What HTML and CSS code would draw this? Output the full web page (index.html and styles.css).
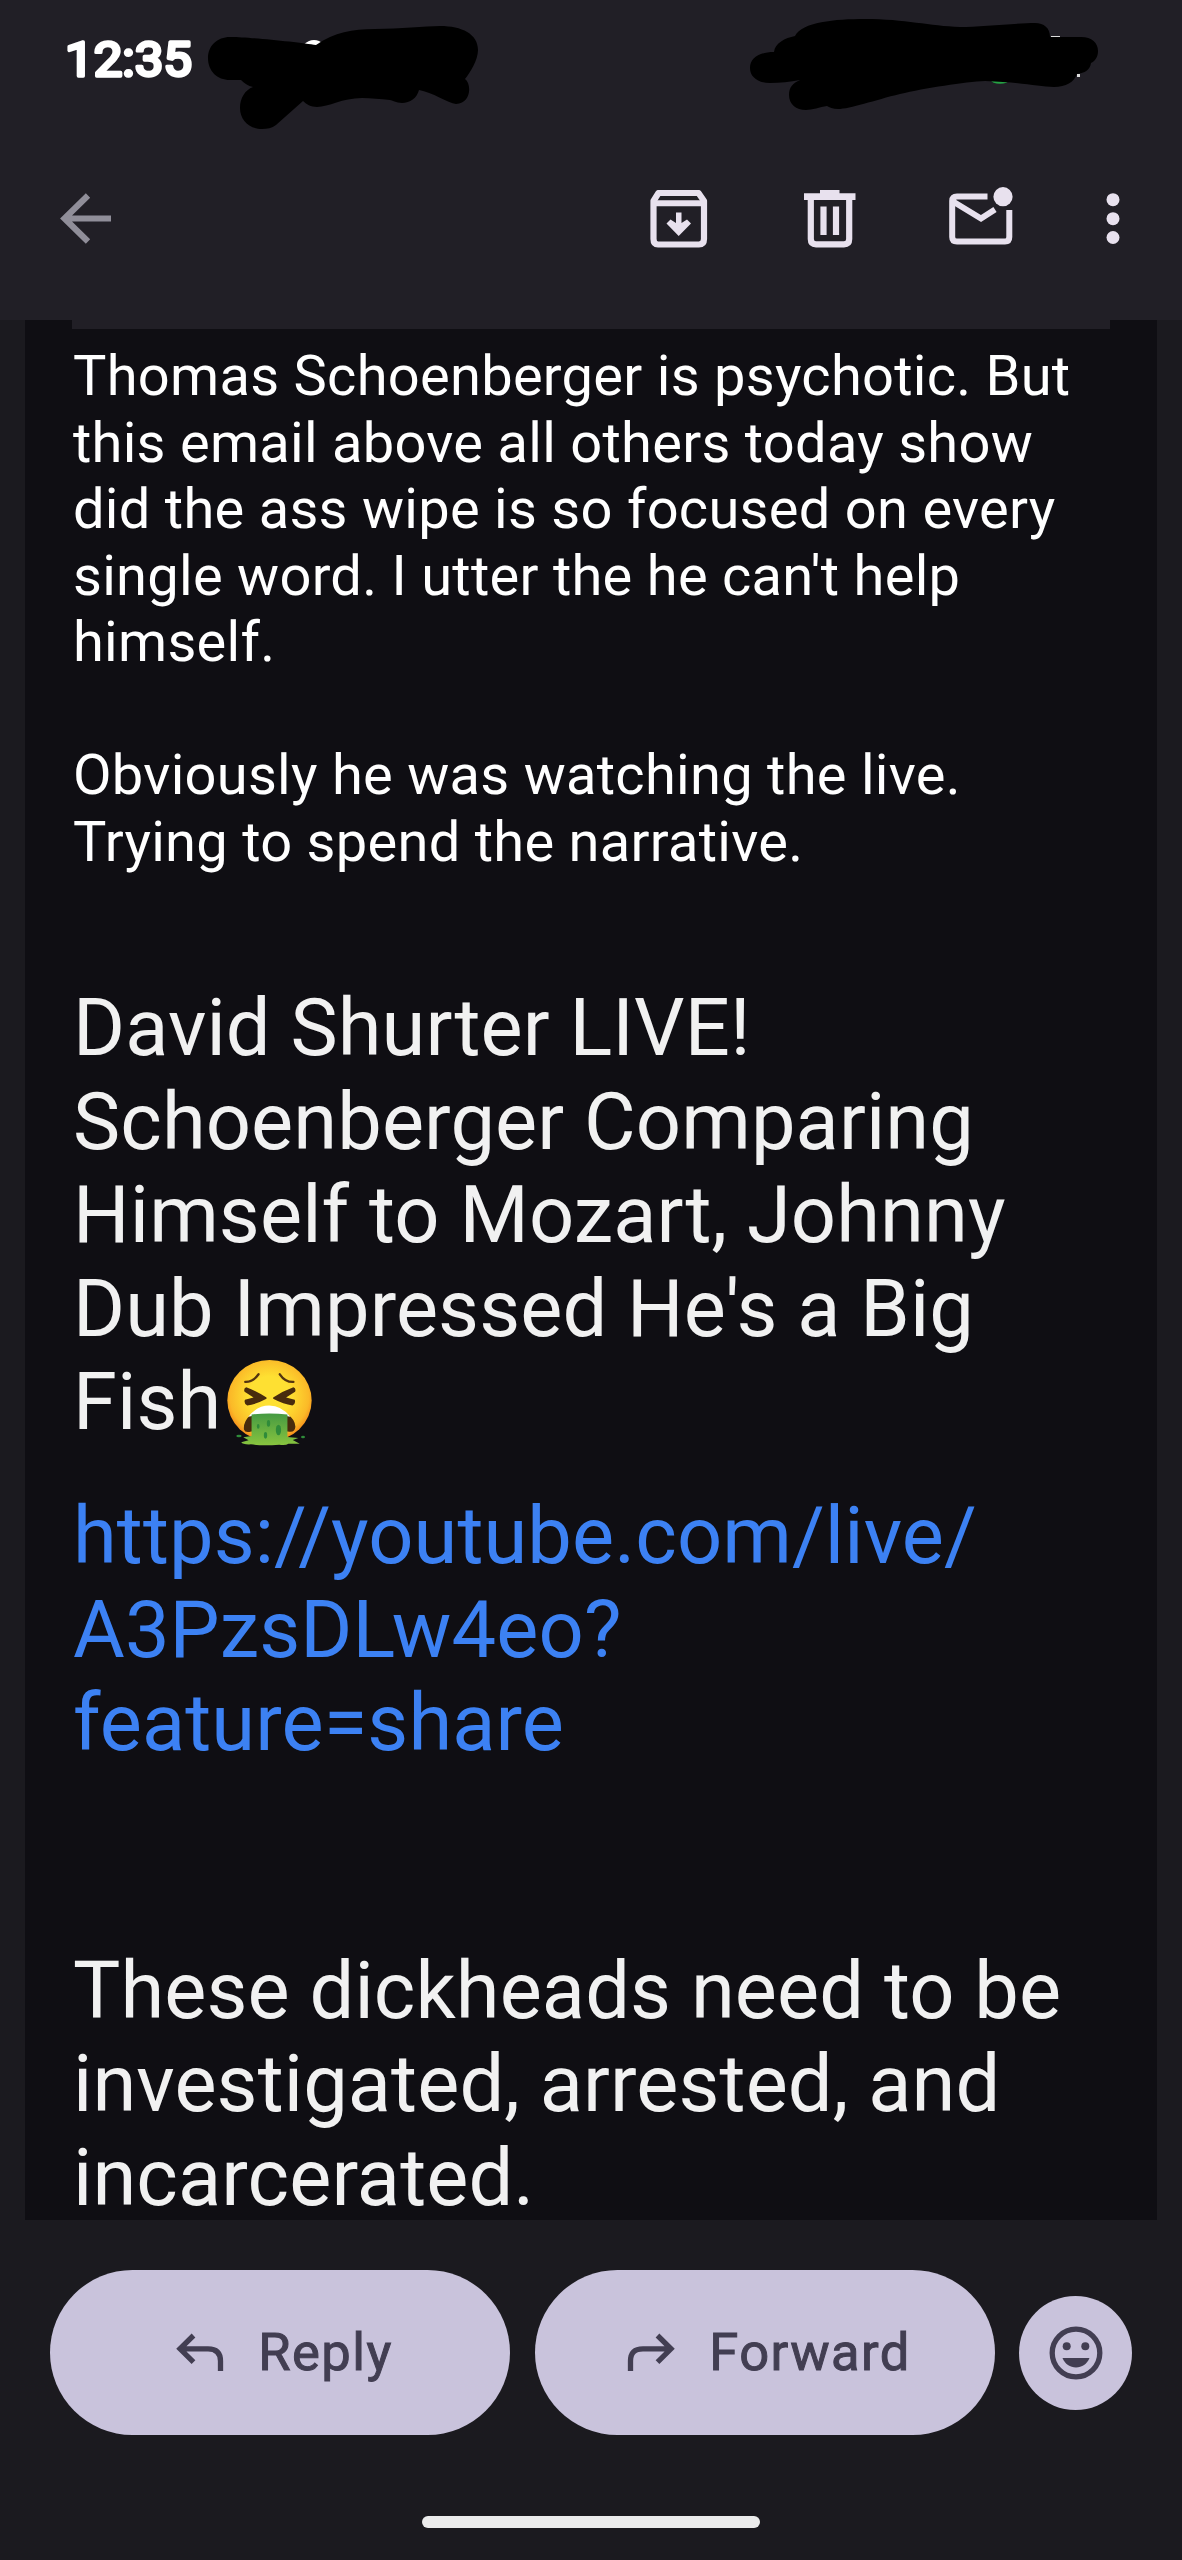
FILE: index.html
```html
<!DOCTYPE html>
<html lang="en">
<head>
    <meta charset="UTF-8">
    <title>mail</title>
    <link rel="stylesheet" href="styles.css">
</head>
<body>
<div class="phone">
    <div class="header">
        <div class="status">
            <svg class="clock" width="140" height="60" viewBox="0 0 140 60">
                <text x="4" y="45" textLength="127" lengthAdjust="spacingAndGlyphs">12:35</text>
            </svg>
            <!-- black marker strokes over the status icons -->
            <svg class="marker" width="1182" height="140" viewBox="0 0 1182 140">
                <circle cx="314" cy="53" r="13" fill="#fff"/>
                <path d="M230 37C236 36 300 42 316 45C335 32 352 29 375 29C400 29 425 26 440 26C462 26 478 34 478 50C478 60 470 73 465 79C472 84 471 104 456 104C448 103 432 92 419 90C417 98 410 103 402 103C396 103 392 100 390 100C380 99 371 98 362 98C342 98 329 107 317 107C311 107 306 104 303 101L276 125C272 128 267 129 262 129C249 129 240 120 240 108C240 98 245 90 253 87C248 86 244 83 241 80L230 80C217 80 208 71 208 58C208 46 217 37 230 37Z"/>
                <ellipse cx="1000" cy="80" rx="9" ry="3.8" fill="#25a244"/>
                <path d="M1051 36h9v3h-9zM1077 74h3v3h-3z" fill="#ddd"/>
                <path d="M774 52C775 43 785 38 795 36C802 22 835 19 865 19C905 19 930 26 960 27C980 27 1018 23 1035 23C1044 23 1050 28 1050 37L1081 37C1092 37 1098 43 1098 51C1098 57 1095 61 1091 63C1090 70 1085 73 1077 74C1074 82 1066 87 1054 87C1038 87 1020 82 985 81C965 82 925 88 900 94C875 100 850 109 838 109C833 109 829 107 827 106C820 107 812 110 806 110C796 110 789 104 789 95C789 87 793 83 800 80C790 82 780 83 770 83C758 83 750 77 750 68C750 58 759 52 774 52Z"/>
            </svg>
        </div>
        <div class="toolbar">
            <svg class="back" width="51" height="51" viewBox="0 0 51 51">
                <path d="M28 2.5L4.5 25.5L28 48.500M5 25.500H51" fill="none" stroke="#908e99" stroke-width="6.200"/>
            </svg>
            <svg class="archive" width="58" height="58" viewBox="0 0 58 58">
                <path d="M8.500 3H48.500L54 11V49Q54 54.500 49 54.500H8Q3.500 54.500 3.500 49V11Z" fill="none" stroke="#e8e1ee" stroke-width="6.200" stroke-linejoin="round"/>
                <path d="M3 13.300H55" fill="none" stroke="#e8e1ee" stroke-width="6"/>
                <path d="M26 22.500H31.500V33L37 29.500L41 33.500L28.700 46L16.500 33.500L20.500 29.500L26 33Z" fill="#e8e1ee"/>
            </svg>
            <svg class="trash" width="52" height="58" viewBox="0 0 52 58">
                <path d="M0 3.200H16V0H35.500V3.200H51.500V10H0Z" fill="#e8e1ee"/>
                <path d="M6.800 8V49Q6.800 54.300 12 54.300H40Q45.200 54.300 45.200 49V8M19.500 16.500V45M32 16.500V45" fill="none" stroke="#e8e1ee" stroke-width="6.200"/>
            </svg>
            <svg class="unread" width="64" height="58" viewBox="0 0 64 58">
                <path d="M38.500 9.500H8Q3.200 9.500 3.200 14V50Q3.200 54.500 8 54.500H56Q60.300 54.500 60.300 50V23" fill="none" stroke="#e8e1ee" stroke-width="6"/>
                <path d="M4 14.500L32 31.500L46 22.500" fill="none" stroke="#e8e1ee" stroke-width="6"/>
                <circle cx="54" cy="9.700" r="9.600" fill="#e8e1ee"/>
            </svg>
            <svg class="more" width="14" height="52" viewBox="0 0 14 52">
                <circle cx="7" cy="6.700" r="6.500" fill="#e8e1ee"/>
                <circle cx="7" cy="25.700" r="6.500" fill="#e8e1ee"/>
                <circle cx="7" cy="44.500" r="6.500" fill="#e8e1ee"/>
            </svg>
        </div>
    </div>

    <div class="mail">
        <div class="rule"></div>
        <p class="text">Thomas Schoenberger is psychotic. But<br>this email above all others today show<br>did the ass wipe is so focused on every<br>single word. I utter the he can't help<br>himself.</p>
        <p class="text">Obviously he was watching the live.<br>Trying to spend the narrative.</p>
        <div class="big title">David Shurter LIVE!<br>Schoenberger Comparing<br>Himself to Mozart, Johnny<br>Dub Impressed He's a Big<br>Fish<svg class="emoji" width="87" height="89" viewBox="80 56 262 266">
            <defs>
                <radialGradient id="face" cx=".5" cy=".45" r=".55">
                    <stop offset=".45" stop-color="#fee032"/>
                    <stop offset=".85" stop-color="#fbb928"/>
                    <stop offset="1" stop-color="#f68a1a"/>
                </radialGradient>
                <linearGradient id="green" x2="0" y2="1">
                    <stop offset="0" stop-color="#459a42"/>
                    <stop offset="1" stop-color="#88c43f"/>
                </linearGradient>
            </defs>
            <ellipse cx="211" cy="183" rx="127" ry="122" fill="url(#face)"/>
            <path d="M138 127Q161 128 178 104M242 104Q258 128 283 127" fill="none" stroke="#543410" stroke-width="7" stroke-linecap="round"/>
            <path d="M141 143Q172 154 202 174V178Q170 195 144 198Q133 192 137 181L163 174L136 157Q132 146 141 143ZM283 143Q252 154 222 174V178Q254 195 280 198Q291 192 287 181L261 174L288 157Q292 146 283 143Z" fill="#482b0d"/>
            <path d="M152 228Q132 246 134 270Q138 282 156 276H266Q287 282 289 262Q288 240 266 225Z" fill="#482b0d"/>
            <path d="M147 232Q174 198 210 198Q247 198 274 232Q210 218 147 232Z" fill="#fff"/>
            <path d="M157 225Q210 219 265 225V293L298 296L281 302L302 313H268Q260 319 240 316Q190 320 155 315Q130 316 126 309L148 303L132 294L157 290Z" fill="url(#green)"/>
            <g fill="#2f8b3a">
                <ellipse cx="238" cy="272" rx="8" ry="16"/>
                <ellipse cx="208" cy="252" rx="5" ry="10"/>
                <ellipse cx="199" cy="288" rx="5" ry="10"/>
                <ellipse cx="177" cy="261" rx="4" ry="7"/>
                <ellipse cx="119" cy="290" rx="8" ry="4"/>
                <ellipse cx="312" cy="293" rx="6" ry="4"/>
            </g>
        </svg></div>
        <a class="big link">https://youtube.com/live/<br>A3PzsDLw4eo?<br>feature=share</a>
        <div class="big">These dickheads need to be<br>investigated, arrested, and<br>incarcerated.</div>
    </div>

    <div class="actions">
        <div class="btn">
            <svg width="48" height="38" viewBox="0 0 48 38">
                <path d="M17.500 2.500L4 15.800L17.500 29.200M4 15.800H32Q44.500 15.800 44.500 28V38" fill="none" stroke="#423e52" stroke-width="5.300"/>
            </svg>
            <span>Reply</span>
        </div>
        <div class="btn">
            <svg width="48" height="38" viewBox="0 0 48 38">
                <path d="M30.500 2.500L44 15.800L30.500 29.200M44 15.800H16Q3.500 15.800 3.500 28V38" fill="none" stroke="#423e52" stroke-width="5.300"/>
            </svg>
            <span>Forward</span>
        </div>
        <div class="react">
            <svg width="54" height="54" viewBox="0 0 54 54">
                <circle cx="27" cy="27" r="23.800" fill="none" stroke="#423e52" stroke-width="5.300"/>
                <circle cx="17.700" cy="20.300" r="4" fill="#423e52"/>
                <circle cx="36.300" cy="20.300" r="4" fill="#423e52"/>
                <path d="M13.500 32H40.500C38 38 33 41.500 27 41.500S16 38 13.500 32Z" fill="#423e52"/>
            </svg>
        </div>
    </div>
    <div class="home"></div>
</div>
</body>
</html>
```
FILE: styles.css
```css
*{
    margin:0;
    padding:0;
    box-sizing: border-box;
}

body{
    background-color: #1b1a1f;
    font-family: Roboto, "Liberation Sans", sans-serif;
}

.phone{
    width:1182px;
    height:2560px;
    display: flex;
    flex-direction: column;
    overflow: hidden;
}

/* status bar + toolbar */
.header{
    height:320px;
    background-color: #211f26;
}
.status{
    position: relative;
    height:140px;
    padding:31px 0 0 61px;
}
.clock text{
    font-size: 48px;
    font-weight: 400;
    fill: #fff;
    stroke: #fff;
    stroke-width: 3.4px;
    stroke-linejoin: round;
}
.marker{
    position: absolute;        /* lies over the status icons */
    left:0;
    top:0;
}
.toolbar{
    height:156px;
    display: flex;
    align-items: center;
    padding-left:60px;
}
.archive{
    margin-left:539px;
    margin-top:2px;
}
.trash{
    margin-left:96px;
    margin-top:2px;
}
.unread{
    margin-left:93px;
    margin-top:-4px;
}
.more{
    margin-left:93px;
    margin-top:2px;
}

/* message */
.mail{
    width:1132px;
    height:1900px;
    margin:0 25px;
    padding:0 47px;
    background-color: #0f0e13;
    white-space: nowrap;
}
.rule{
    height:9px;
    background-color: #211f26;
    margin-bottom:14px;
}
.text{
    font-size: 56px;
    line-height: 66.5px;
    letter-spacing: 0.28px;
    margin-bottom:66.5px;
    padding-left:1px;
    color: #fff;
}
.big{
    display: block;
    font-size: 79.4px;
    line-height: 93.6px;
    letter-spacing: 0.1px;
    padding-left:1px;
    color: #f1f1f1;
}
.title{
    margin-top:106px;
}
.emoji{
    vertical-align: -18px;
    margin-left:5px;
}
.link{
    color: #3c81f3;
    margin:40px 0 174px;
}

/* bottom buttons */
.actions{
    display: flex;
    align-items: center;
    margin:50px 49px 0 50px;
    gap:24.5px;
}
.btn{
    width:460px;
    height:165px;
    border-radius: 83px;
    background-color: #c9c3dc;
    color: #423e52;
    font-size: 52.5px;
    letter-spacing: 1.4px;
    -webkit-text-stroke: 1px #423e52;
    display: flex;
    align-items: center;
    justify-content: center;
    gap:34px;
    padding:0 0 2px 9px;
}
.react{
    width:113px;
    height:114px;
    border-radius: 50%;
    background-color: #c9c3dc;
    display: flex;
    align-items: center;
    justify-content: center;
}
.home{
    width:338px;
    height:12px;
    border-radius: 6px;
    background-color: #ececec;
    margin:81px auto 0;
}
```
